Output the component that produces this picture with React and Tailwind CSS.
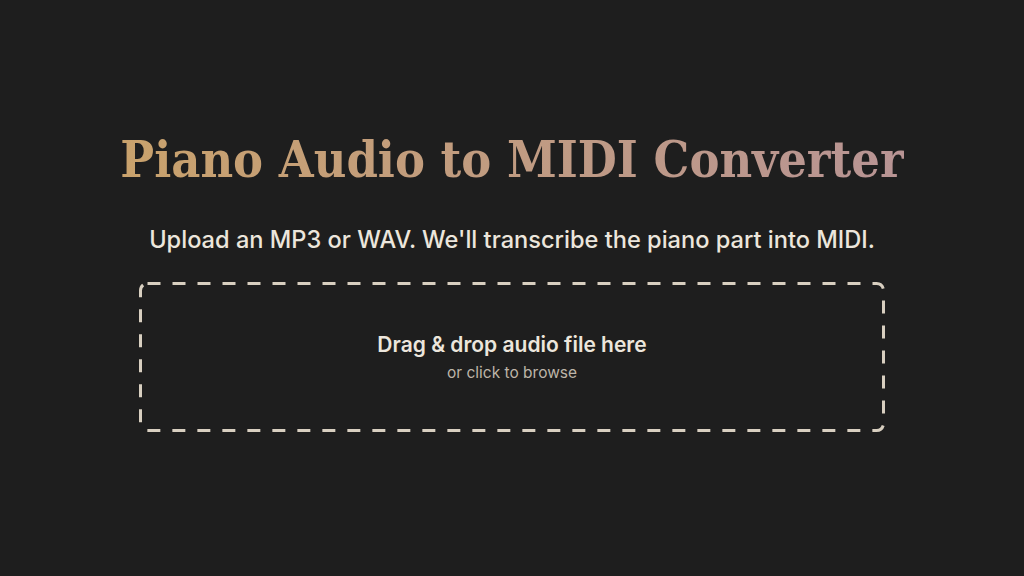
export default function App() {
  return (
    <div className="min-h-screen w-full bg-[#1e1e1e] flex flex-col items-center">
      <h1
        className="mt-[130px] text-[50px] leading-[60px] font-bold bg-gradient-to-r from-[#c9a26c] to-[#b89494] bg-clip-text text-transparent"
        style={{ fontFamily: '"DejaVu Serif", serif', fontStretch: 'condensed' }}
      >
        Piano Audio to MIDI Converter
      </h1>
      <p className="mt-[35px] text-[23.6px] leading-[30px] font-medium text-[#ece6dc] font-['Inter',sans-serif]">
        Upload an MP3 or WAV. We'll transcribe the piano part into MIDI.
      </p>
      <div className="relative mt-[27px] w-[746px] h-[150px] flex flex-col items-center justify-center gap-[5px] font-['Inter',sans-serif]">
        <svg className="absolute inset-0 pointer-events-none" width="746" height="150" viewBox="0 0 746 150">
          <rect x="1.5" y="1.5" width="743" height="147" rx="7" ry="7" fill="none" stroke="#d8cfc0" strokeWidth="3" strokeDasharray="13 12" />
        </svg>
        <div className="text-[21px] leading-[26px] font-semibold text-[#ece6dc]">Drag &amp; drop audio file here</div>
        <div className="text-[15.5px] leading-[20px] text-[#bdb5a8]">or click to browse</div>
      </div>
    </div>
  );
}
